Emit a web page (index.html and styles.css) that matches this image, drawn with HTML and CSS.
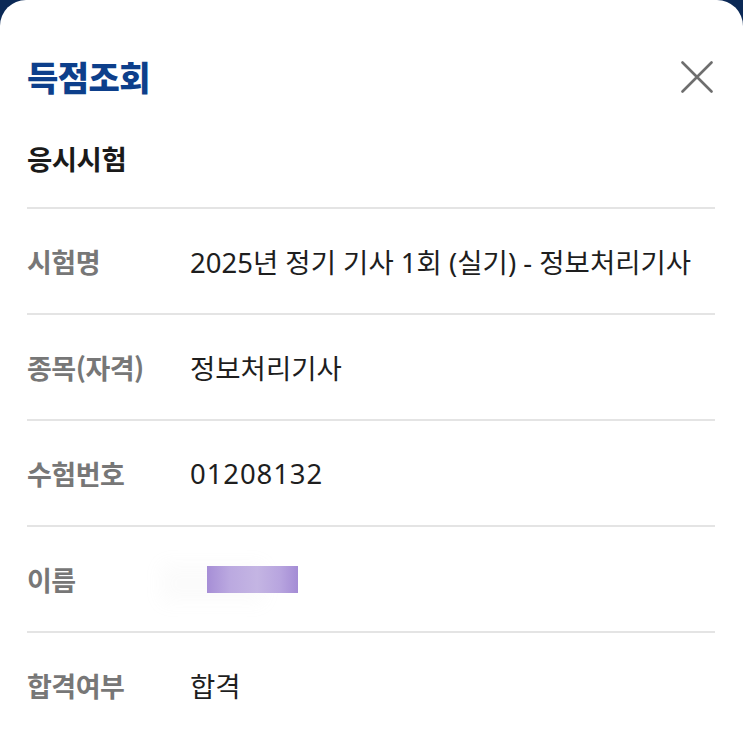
FILE: index.html
```html
<!DOCTYPE html>
<html lang="ko">
<head>
<meta charset="utf-8">
<title>득점조회</title>
<link rel="stylesheet" href="styles.css">
</head>
<body>
<div class="sheet">
  <header class="sheet-header">
    <h1 class="title">득점조회</h1>
    <button class="close" aria-label="닫기">
      <svg width="32" height="32" viewBox="0 0 32 32"><path d="M1.5 1.5 L30.5 30.5 M30.5 1.5 L1.5 30.5" stroke="#6e6e6e" stroke-width="2.6" stroke-linecap="round" fill="none"/></svg>
    </button>
  </header>
  <h2 class="section">응시시험</h2>
  <dl class="rows">
    <div class="row"><dt class="label">시험명</dt><dd class="value">2025년 정기 기사 1회 (실기) - 정보처리기사</dd></div>
    <div class="row"><dt class="label">종목(자격)</dt><dd class="value">정보처리기사</dd></div>
    <div class="row"><dt class="label">수험번호</dt><dd class="value"><span class="num">01208132</span></dd></div>
    <div class="row"><dt class="label">이름</dt><dd class="value"><span class="redact"></span></dd></div>
    <div class="row last"><dt class="label">합격여부</dt><dd class="value">합격</dd></div>
  </dl>
</div>
</body>
</html>
```

FILE: styles.css
```css
html, body {
  margin: 0;
  padding: 0;
  height: 100%;
  background: #0b2956;
  overflow: hidden;
}
body {
  font-family: "Noto Sans", "Noto Sans CJK KR", sans-serif;
}
.sheet {
  background: #ffffff;
  border-radius: 26px 26px 0 0;
  min-height: 100%;
  padding: 56px 28px 0 27px;
  box-sizing: border-box;
}
.sheet-header {
  display: flex;
  justify-content: space-between;
  align-items: center;
  height: 42px;
}
.title {
  margin: 0;
  font-family: "Noto Sans CJK KR", sans-serif;
  font-weight: 900;
  font-size: 34px;
  line-height: 42px;
  color: #0d3f8b;
  letter-spacing: -0.5px;
}
.close {
  border: 0;
  background: none;
  padding: 0;
  margin-right: 2px;
  width: 32px;
  height: 32px;
  display: flex;
}
.section {
  margin: 40px 0 0;
  padding-bottom: 29px;
  border-bottom: 2px solid #e4e4e4;
  font-family: "Noto Sans CJK KR", sans-serif;
  font-weight: 700;
  font-size: 27.5px;
  line-height: 40px;
  color: #1a1a1a;
  letter-spacing: -0.5px;
}
.rows {
  margin: 0;
}
.row {
  display: flex;
  align-items: center;
  height: 104px;
  border-bottom: 2px solid #e4e4e4;
}
.row.last {
  border-bottom: 0;
}
.label {
  width: 163px;
  flex: none;
  font-family: "Noto Sans CJK KR", sans-serif;
  font-weight: 700;
  font-size: 27px;
  color: #777777;
  letter-spacing: -0.5px;
}
.value {
  margin: 0;
  font-size: 27.5px;
  color: #1e1e1e;
  letter-spacing: 0;
}
.num {
  letter-spacing: 0.9px;
}
.redact {
  display: block;
  margin-left: 17px;
  width: 91px;
  height: 27px;
  background: linear-gradient(90deg, #a68ed6 0%, #bba9e0 25%, #c4b5e3 55%, #b8a5df 80%, #a48cd5 100%);
  box-shadow: -40px 4px 18px 6px rgba(200, 200, 205, 0.08);
}
```
